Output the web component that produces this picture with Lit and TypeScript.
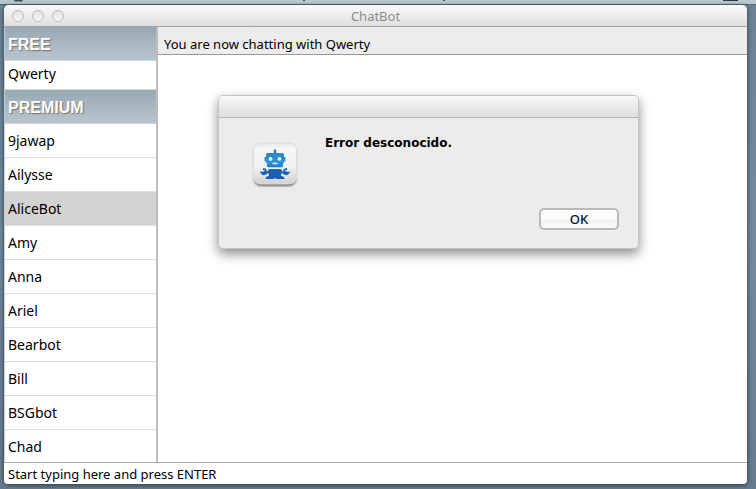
import { LitElement, html, css, svg } from "lit";
import { customElement, property, state } from "lit/decorators.js";
import { classMap } from "lit/directives/class-map.js";

const robot = svg`
  <defs>
    <linearGradient id="tile" x1="0" y1="0" x2="0" y2="1">
      <stop offset="0" stop-color="#e6e6e6"/><stop offset=".15" stop-color="#f7f7f7"/>
      <stop offset=".6" stop-color="#f0f0f0"/><stop offset="1" stop-color="#d2d2d2"/>
    </linearGradient>
    <linearGradient id="blue" gradientUnits="userSpaceOnUse" x1="0" y1="7" x2="0" y2="38">
      <stop offset="0" stop-color="#2d86bd"/><stop offset=".45" stop-color="#2a93d8"/>
      <stop offset=".7" stop-color="#1a62ab"/><stop offset="1" stop-color="#1a5cb6"/>
    </linearGradient>
    <filter id="soft" x="-20%" y="-20%" width="140%" height="140%"><feGaussianBlur stdDeviation="1"/></filter>
  </defs>
  <rect x="3" y="5" width="42" height="39" rx="7" fill="#666" filter="url(#soft)"/>
  <rect x="2.500" y="1" width="43" height="41" rx="7" fill="url(#tile)" stroke="#dcdcdc" stroke-width="1"/>
  <g fill="url(#blue)">
    <path d="M22.700 8.500a1.300 1.300 0 0 1 2.600 0v3h-2.600z"/>
    <path fill-rule="evenodd" d="M16.500 11h15q1.500 0 1.500 1.500V15h1.500v4.500H33V21h-1v3q0 1.200-1.200 1.200H17.200Q16 25.200 16 24v-3h-1v-1.500h-1.500V15H15v-2.500q0-1.500 1.500-1.500zM19.500 15a1.900 1.900 0 1 0 0 3.800 1.900 1.900 0 0 0 0-3.800zM28.500 15a1.900 1.900 0 1 0 0 3.800 1.900 1.900 0 0 0 0-3.800zM21.500 20.700v1.500h5v-1.500z"/>
    <path d="M17 28.500q.2-1.500 1.500-1.500h11q1.300 0 1.500 1.500L30 34q3.500.3 3.500 3h-8L24 36l-1.500 1h-8q0-2.700 3.500-3z"/>
  </g>
  <g fill="none" stroke="url(#blue)" stroke-width="2">
    <path d="M12 27q3 0 2.700 2.200-.7 2-3.900 1.600 1.600 2.200 3.900.7 1.500-1.600 3.300-1.800"/>
    <path d="M36 27q-3 0-2.700 2.200.7 2 3.900 1.600-1.600 2.200-3.900.7-1.500-1.600-3.300-1.800"/>
  </g>`;

@customElement("error-dialog")
export class ErrorDialog extends LitElement {
  @property() message = "";

  static styles = css`
    :host {
      display: block;
      box-sizing: border-box;
      border: 1px solid #c4c4c4;
      border-radius: 5px;
      background: #ececec;
      box-shadow: 0 5px 12px rgba(0, 0, 0, 0.45);
      overflow: hidden;
    }
    .bar {
      height: 21px;
      border-bottom: 1px solid #b4b4b4;
      background: linear-gradient(#f8f8f8, #dedede);
    }
    .body {
      display: flex;
      align-items: flex-start;
      gap: 26px;
      padding: 16px 20px 0 32px;
    }
    .icon {
      flex: none;
      width: 48px;
      height: 48px;
      padding-top: 8px;
    }
    .message {
      margin: 0;
      font: 700 12px/18px "DejaVu Sans", sans-serif;
    }
    .actions {
      display: flex;
      justify-content: flex-end;
      padding: 18px 19px;
    }
    .ok {
      width: 80px;
      height: 22px;
      padding: 0;
      border: 2px solid #b9b9b9;
      border-radius: 5px;
      background: linear-gradient(#fff, #fafafa 50%, #f0f0f0 55%, #fafafa);
      font: 500 13px/16px "Noto Sans", sans-serif;
      color: #111;
    }
  `;

  render() {
    return html`
      <div class="bar"></div>
      <div class="body">
        <svg class="icon" viewBox="0 0 48 48" aria-hidden="true">${robot}</svg>
        <p class="message">${this.message}</p>
      </div>
      <div class="actions">
        <button class="ok" @click=${() => this.dispatchEvent(new Event("dismiss"))}>OK</button>
      </div>
    `;
  }
}

@customElement("app-root")
export class AppRoot extends LitElement {
  @state() private selected = "AliceBot";
  @state() private failed = true;

  private free = ["Qwerty"];
  private premium = ["9jawap", "Ailysse", "AliceBot", "Amy", "Anna", "Ariel", "Bearbot", "Bill", "BSGbot", "Chad"];

  static styles = css`
    :host {
      display: flex;
      flex-direction: column;
      box-sizing: border-box;
      height: 100vh;
      background: linear-gradient(#6d8394, #748b9d 50%, #667c8c);
      font: 13px/18px "Noto Sans", sans-serif;
      color: #000;
      overflow: hidden;
    }
    .menubar {
      flex: none;
      display: flex;
      justify-content: space-between;
      align-items: flex-start;
      height: 4px;
      padding: 0 18px 0 13px;
      background: #bacad3;
      border-bottom: 1px solid #566b7b;
    }
    .glyph {
      width: 11px;
      height: 2px;
    }
    .marks {
      display: flex;
      gap: 138px;
    }
    .descender {
      width: 2px;
      height: 1px;
      background: #44505a;
    }
    .battery {
      width: 15px;
      height: 1px;
      background: #30363c;
    }
    .window {
      flex: 1;
      min-height: 0;
      display: flex;
      flex-direction: column;
      position: relative;
      margin: 0 9px 5px 4px;
      border-radius: 5px;
      background: #fff;
      box-shadow: 0 1px 5px rgba(20, 35, 50, 0.8);
    }
    .titlebar {
      flex: none;
      display: grid;
      grid-template-columns: 1fr auto 1fr;
      align-items: center;
      height: 21px;
      border-bottom: 1px solid #a3a3a3;
      border-radius: 5px 5px 0 0;
      background: linear-gradient(#fafafa, #dfdfdf);
    }
    .lights {
      display: flex;
      gap: 8px;
      padding-left: 8px;
    }
    .light {
      box-sizing: border-box;
      width: 12px;
      height: 12px;
      padding: 0;
      border: 1px solid #b9b9b9;
      border-radius: 50%;
      background: linear-gradient(#e2e2e2, #f6f6f6);
    }
    .title {
      margin: 0;
      font-size: 13px;
      font-weight: 400;
      color: #8d8d8d;
    }
    .content {
      flex: 1;
      min-height: 0;
      display: flex;
    }
    .sidebar {
      flex: none;
      box-sizing: border-box;
      width: 154px;
      border-left: 1px solid #c8ced2;
      border-right: 2px solid #bdbdbd;
      overflow: hidden;
    }
    .group {
      box-sizing: border-box;
      height: 34px;
      margin: 0;
      padding: 0 3px;
      border-bottom: 1px solid #cfd3d6;
      background: linear-gradient(#98a9b4, #b8c4cd);
      font: 700 16px/36px "Liberation Sans", sans-serif;
      color: #fff;
      text-shadow: 1px 1px 1px #77706a;
    }
    .list {
      margin: 0;
      padding: 0;
      list-style: none;
    }
    .bot {
      display: block;
      box-sizing: border-box;
      width: 100%;
      height: 34px;
      padding: 0 3px;
      border: 0;
      border-bottom: 1px solid #dedede;
      background: #fff;
      font: 14px/32px "Noto Sans", sans-serif;
      color: #000;
      text-align: left;
    }
    .short .bot {
      height: 29px;
      padding-bottom: 2px;
      line-height: 26px;
    }
    .bot.selected {
      background: #d3d3d3;
    }
    .chat {
      flex: 1;
      min-width: 0;
    }
    .status {
      box-sizing: border-box;
      height: 28px;
      margin: 0;
      padding: 8px 6px 0;
      border-bottom: 1px solid #999;
      background: #ececec;
    }
    .entry {
      flex: none;
      box-sizing: border-box;
      width: 100%;
      height: 22px;
      padding: 0 4px;
      border: 0;
      border-top: 1px solid #aaa;
      border-radius: 0 0 4px 4px;
      outline: 0;
      background: #fff;
      font: inherit;
    }
    .entry::placeholder {
      color: #000;
      opacity: 1;
    }
    .dialog {
      position: absolute;
      top: 90px;
      left: 214px;
      width: 421px;
      height: 154px;
    }
  `;

  private bots(names: string[]) {
    return names.map(
      (name) => html`<li>
        <button class=${classMap({ bot: true, selected: name === this.selected })} @click=${() => (this.selected = name)}>
          ${name}
        </button>
      </li>`
    );
  }

  render() {
    return html`
      <div class="menubar">
        <svg class="glyph" viewBox="0 0 11 2" aria-hidden="true">
          <path d="M1 0h9L9 1.500H6.500L5.500 1l-1 .5H2z" fill="#444e57" />
        </svg>
        <div class="marks">
          <span class="descender"></span>
          <span class="descender"></span>
        </div>
        <span class="battery"></span>
      </div>
      <main class="window">
        <header class="titlebar">
          <div class="lights">
            <button class="light" aria-label="Close"></button>
            <button class="light" aria-label="Minimize"></button>
            <button class="light" aria-label="Zoom"></button>
          </div>
          <h1 class="title">ChatBot</h1>
        </header>
        <div class="content">
          <nav class="sidebar">
            <h2 class="group">FREE</h2>
            <ul class="list short">${this.bots(this.free)}</ul>
            <h2 class="group">PREMIUM</h2>
            <ul class="list">${this.bots(this.premium)}</ul>
          </nav>
          <section class="chat">
            <p class="status">You are now chatting with Qwerty</p>
          </section>
        </div>
        <input class="entry" aria-label="Message" placeholder="Start typing here and press ENTER" />
        ${this.failed
          ? html`<error-dialog
              class="dialog"
              role="alertdialog"
              message="Error desconocido."
              @dismiss=${() => (this.failed = false)}
            ></error-dialog>`
          : null}
      </main>
    `;
  }
}
